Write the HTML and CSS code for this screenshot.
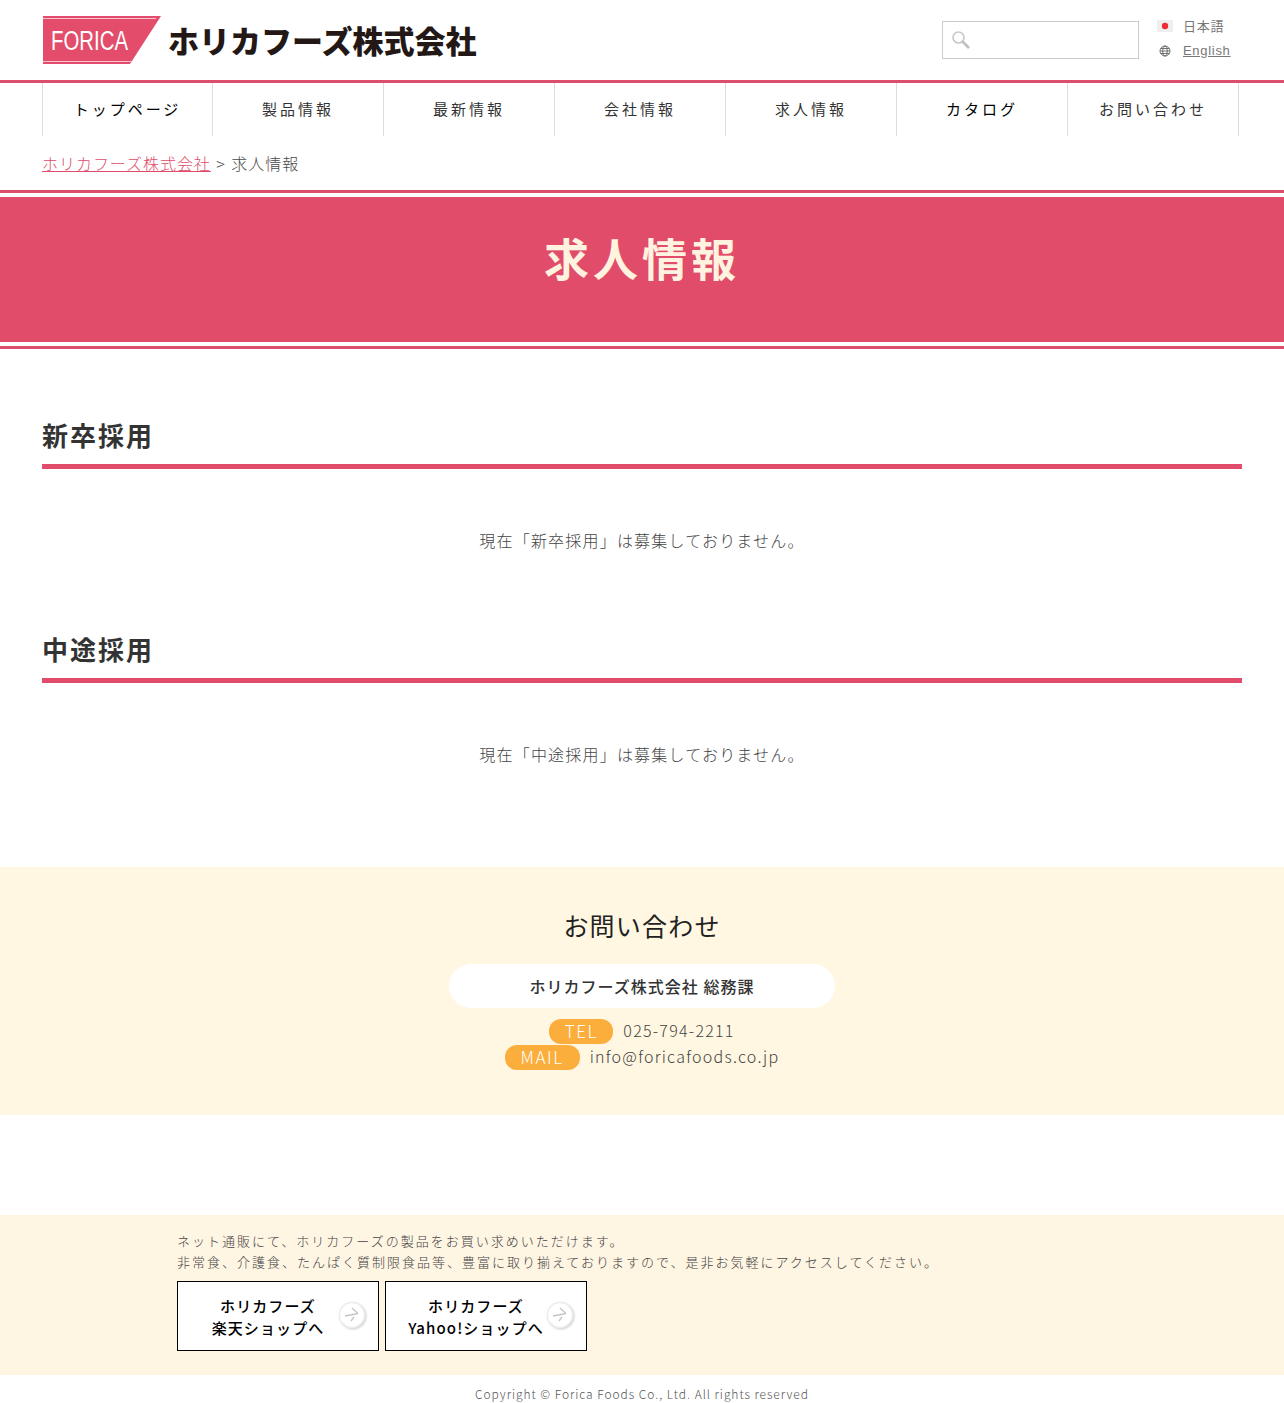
FILE: index.html
```html
<!DOCTYPE html>
<html lang="ja">
<head>
    <meta charset="UTF-8">
    <meta name="viewport" content="width=device-width, initial-scale=1.0">
    <title>求人情報 | ホリカフーズ株式会社</title>
    <link rel="stylesheet" href="styles.css">
</head>
<body>
    <header class="site-header">
        <a class="logo" href="#">
            <svg class="logo-mark" width="119" height="48" viewBox="0 0 119 48">
                <polygon points="1,0 119,0 88,48 1,48" fill="#e34d6b"/>
                <path d="M1 2.5H114M1 45.5H91" stroke="#f6c3cf" stroke-width="1"/>
                <text x="9" y="34" class="logo-mark-text" textLength="77" lengthAdjust="spacingAndGlyphs">FORICA</text>
            </svg>
            <span class="logo-name">ホリカフーズ株式会社</span>
        </a>
        <div class="header-right">
            <div class="search-box">
                <svg class="search-icon" width="20" height="20" viewBox="0 0 20 20">
                    <circle cx="7.5" cy="7.5" r="5.5" fill="none" stroke="#c8c8c8" stroke-width="1.6"/>
                    <path d="M11.5 11.5L18 18" stroke="#c0c0c0" stroke-width="2.6"/>
                </svg>
            </div>
            <ul class="lang-list">
                <li>
                    <svg class="lang-icon" width="16" height="12" viewBox="0 0 16 12">
                        <rect width="16" height="12" fill="#eee"/>
                        <circle cx="8" cy="6" r="3.2" fill="#ee2a35"/>
                    </svg>
                    <span>日本語</span>
                </li>
                <li>
                    <svg class="lang-icon" width="16" height="12" viewBox="0 0 16 12">
                        <g fill="none" stroke="#555" stroke-width="0.8">
                            <circle cx="8" cy="6" r="5"/>
                            <ellipse cx="8" cy="6" rx="2.2" ry="5"/>
                            <path d="M3 6H13M3.7 3.5H12.3M3.7 8.5H12.3"/>
                        </g>
                    </svg>
                    <a href="#">English</a>
                </li>
            </ul>
        </div>
    </header>

    <nav class="global-nav">
        <a class="nav-item nav-dark" href="#">トップページ</a>
        <a class="nav-item" href="#">製品情報</a>
        <a class="nav-item" href="#">最新情報</a>
        <a class="nav-item" href="#">会社情報</a>
        <a class="nav-item" href="#">求人情報</a>
        <a class="nav-item nav-dark" href="#">カタログ</a>
        <a class="nav-item" href="#">お問い合わせ</a>
    </nav>

    <div class="breadcrumb"><a href="#">ホリカフーズ株式会社</a> &gt; 求人情報</div>

    <div class="page-title">
        <h1>求人情報</h1>
    </div>

    <main class="content">
        <section class="recruit-section">
            <h2>新卒採用</h2>
            <p>現在「新卒採用」は募集しておりません。</p>
        </section>
        <section class="recruit-section">
            <h2>中途採用</h2>
            <p>現在「中途採用」は募集しておりません。</p>
        </section>
    </main>

    <section class="contact">
        <h3>お問い合わせ</h3>
        <div class="contact-name">ホリカフーズ株式会社 総務課</div>
        <div class="contact-line"><span class="pill pill-tel">TEL</span>025-794-2211</div>
        <div class="contact-line"><span class="pill pill-mail">MAIL</span>info@foricafoods.co.jp</div>
    </section>

    <section class="shop">
        <div class="shop-inner">
            <p>ネット通販にて、ホリカフーズの製品をお買い求めいただけます。<br>非常食、介護食、たんぱく質制限食品等、豊富に取り揃えておりますので、是非お気軽にアクセスしてください。</p>
            <div class="shop-buttons">
                <a class="shop-btn" href="#">
                    <span class="shop-label">ホリカフーズ<br>楽天ショップへ</span>
                    <svg class="shop-arrow" width="28" height="28" viewBox="0 0 28 28">
                        <circle cx="14" cy="14" r="12.5" fill="#fff" stroke="#eee" stroke-width="1.5"/>
                        <path d="M7 15L20 12.5M14 7L20 12.5M16 16L13 20" fill="none" stroke="#c4c4c4" stroke-width="1.3"/>
                    </svg>
                </a>
                <a class="shop-btn" href="#">
                    <span class="shop-label">ホリカフーズ<br>Yahoo!ショップへ</span>
                    <svg class="shop-arrow" width="28" height="28" viewBox="0 0 28 28">
                        <circle cx="14" cy="14" r="12.5" fill="#fff" stroke="#eee" stroke-width="1.5"/>
                        <path d="M7 15L20 12.5M14 7L20 12.5M16 16L13 20" fill="none" stroke="#c4c4c4" stroke-width="1.3"/>
                    </svg>
                </a>
            </div>
        </div>
    </section>

    <footer class="site-footer">Copyright © Forica Foods Co., Ltd. All rights reserved</footer>
</body>
</html>
```

FILE: styles.css
```css
* {
    box-sizing: border-box;
}

body {
    margin: 0;
    font-family: "Noto Sans CJK JP", "Noto Sans", sans-serif;
    font-weight: 300;
    color: #444;
    background-color: #fff;
}

a {
    color: inherit;
    text-decoration: none;
}

.site-header {
    height: 83px;
    padding: 16px 49px 0 42px;
    display: flex;
    justify-content: space-between;
    border-bottom: 3px solid #dc4f6c;
}

.logo {
    display: flex;
    align-items: flex-start;
}

.logo-mark {
    display: block;
}

.logo-mark-text {
    fill: #fff;
    font-family: "Liberation Sans", sans-serif;
    font-size: 27px;
}

.logo-name {
    margin: 2px 0 0 7px;
    color: #231815;
    font-size: 31px;
    font-weight: 900;
    line-height: 44px;
    white-space: nowrap;
}

.header-right {
    display: flex;
    align-items: flex-start;
}

.search-box {
    width: 197px;
    height: 38px;
    margin: 5px 18px 0 0;
    padding: 8px;
    border: 1px solid #ccc;
}

.search-icon {
    display: block;
}

.lang-list {
    width: 78px;
    margin: -3px 0 0;
    padding: 0;
    list-style: none;
    font-family: "Liberation Sans", "Noto Sans CJK JP", sans-serif;
    font-weight: 400;
    font-size: 13px;
    color: #777;
    letter-spacing: 0.7px;
}

.lang-list li {
    height: 25px;
    display: flex;
    align-items: center;
    gap: 10px;
}

.lang-list a {
    text-decoration: underline;
}

.global-nav {
    margin: 0 45px 0 42px;
    height: 53px;
    display: flex;
    border-right: 1px solid #ddd;
}

.nav-item {
    width: 171px;
    padding-bottom: 2px;
    display: flex;
    align-items: center;
    justify-content: center;
    border-left: 1px solid #ddd;
    color: #333;
    font-size: 15px;
    font-weight: 400;
    letter-spacing: 3px;
}

.nav-item:first-child {
    width: 170px;
}

.nav-dark {
    color: #000;
}

.breadcrumb {
    height: 54px;
    padding: 15px 42px 0;
    font-size: 16px;
    line-height: 25px;
    letter-spacing: 0.96px;
    word-spacing: 1px;
    color: #4a4a4a;
}

.breadcrumb a {
    color: #e04c6a;
    text-decoration: underline;
}

.page-title {
    height: 159px;
    padding: 4px 0;
    border-top: 3px solid #dc4f6c;
    border-bottom: 3px solid #dc4f6c;
}

.page-title h1 {
    margin: 0;
    height: 100%;
    padding-top: 28px;
    background-color: #e14c6a;
    color: #fff3e0;
    font-size: 45px;
    font-weight: 700;
    line-height: 65px;
    letter-spacing: 4px;
    text-align: center;
}

.content {
    margin: 0 42px;
    width: 1200px;
    padding-top: 67px;
}

.recruit-section {
    height: 214px;
}

.recruit-section h2 {
    margin: 0;
    height: 53px;
    border-bottom: 5px solid #e04c6a;
    color: #333;
    font-size: 26px;
    font-weight: 700;
    line-height: 38px;
    letter-spacing: 2px;
}

.recruit-section p {
    margin: 0;
    padding-top: 59px;
    font-size: 16px;
    line-height: 25px;
    letter-spacing: 1.2px;
    text-align: center;
    color: #444;
}

.contact {
    margin-top: 23px;
    height: 248px;
    padding-top: 38px;
    background-color: #fff7e1;
    text-align: center;
}

.contact h3 {
    margin: 0 0 19px;
    font-size: 25px;
    font-weight: 400;
    line-height: 40px;
    letter-spacing: 1.2px;
    color: #222;
}

.contact-name {
    width: 386px;
    height: 44px;
    margin: 0 auto 11px;
    border-radius: 22px;
    background-color: #fff;
    font-size: 16px;
    font-weight: 500;
    line-height: 44px;
    letter-spacing: 1px;
    color: #333;
}

.contact-line {
    height: 26px;
    font-size: 16px;
    line-height: 23px;
    letter-spacing: 1.25px;
    color: #444;
}

.pill {
    display: inline-block;
    height: 25px;
    margin-right: 10px;
    border-radius: 12px;
    background-color: #fbae3c;
    color: #fff;
    font-size: 17px;
    font-weight: 300;
    letter-spacing: 1.6px;
    vertical-align: top;
}

.pill-tel {
    width: 64px;
}

.pill-mail {
    width: 75px;
}

.shop {
    margin-top: 100px;
    height: 160px;
    padding: 15px 177px 0;
    background-color: #fff5e3;
}

.shop p {
    margin: 0 0 9px;
    font-size: 13px;
    line-height: 21px;
    letter-spacing: 2px;
    color: #444;
}

.shop-buttons {
    display: flex;
    gap: 6px;
}

.shop-btn {
    width: 202px;
    height: 70px;
    padding-top: 2px;
    display: flex;
    align-items: center;
    border: 1px solid #000;
    background-color: #fff;
    color: #000;
}

.shop-label {
    width: 180px;
    font-size: 15px;
    font-weight: 500;
    line-height: 22px;
    letter-spacing: 1.1px;
    text-align: center;
}

.shop-arrow {
    margin: -4px 0 0 -20px;
    flex-shrink: 0;
    filter: drop-shadow(1px 1px 1px #ccc);
}

.site-footer {
    height: 28px;
    padding-top: 8px;
    font-size: 12px;
    line-height: 22px;
    letter-spacing: 0.96px;
    text-align: center;
    color: #555;
}
```
